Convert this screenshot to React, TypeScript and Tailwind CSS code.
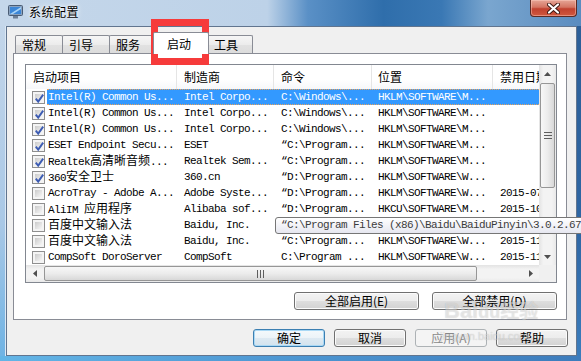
const CJK = /([\u2E80-\u9FFF]+)/;

function Mixed({ s }: { s: string }) {
  return (
    <span className="whitespace-pre">
      {s.split(CJK).map((p, i) =>
        i % 2 === 1 ? (
          <span key={i} className="font-['Noto_Sans_CJK_SC',sans-serif] text-[12px] tracking-normal">
            {p}
          </span>
        ) : (
          <span key={i}>{p}</span>
        )
      )}
    </span>
  );
}

type Row = { on: boolean; sel?: boolean; name: string; maker: string; cmd: string; loc: string; date: string };

const rows: Row[] = [
  { on: true, sel: true, name: "Intel(R) Common Us...", maker: "Intel Corpo...", cmd: "C:\\Windows\\...", loc: "HKLM\\SOFTWARE\\M...", date: "" },
  { on: true, name: "Intel(R) Common Us...", maker: "Intel Corpo...", cmd: "C:\\Windows\\...", loc: "HKLM\\SOFTWARE\\M...", date: "" },
  { on: true, name: "Intel(R) Common Us...", maker: "Intel Corpo...", cmd: "C:\\Windows\\...", loc: "HKLM\\SOFTWARE\\M...", date: "" },
  { on: true, name: "ESET Endpoint Secu...", maker: "ESET", cmd: "\u201CC:\\Program...", loc: "HKLM\\SOFTWARE\\M...", date: "" },
  { on: true, name: "Realtek高清晰音频...", maker: "Realtek Sem...", cmd: "\u201CC:\\Program...", loc: "HKLM\\SOFTWARE\\M...", date: "" },
  { on: true, name: "360安全卫士", maker: "360.cn", cmd: "\u201CD:\\Program...", loc: "HKLM\\SOFTWARE\\W...", date: "" },
  { on: false, name: "AcroTray - Adobe A...", maker: "Adobe Syste...", cmd: "\u201CD:\\Program...", loc: "HKLM\\SOFTWARE\\W...", date: "2015-07" },
  { on: false, name: "AliIM 应用程序", maker: "Alibaba sof...", cmd: "\u201CD:\\Program...", loc: "HKCU\\SOFTWARE\\M...", date: "2015-10" },
  { on: false, name: "百度中文输入法", maker: "Baidu, Inc.", cmd: "\u201CC:\\Program...", loc: "HKLM\\SOFTWARE\\W...", date: "2015-11" },
  { on: false, name: "百度中文输入法", maker: "Baidu, Inc.", cmd: "\u201CC:\\Program...", loc: "HKLM\\SOFTWARE\\W...", date: "2015-11" },
  { on: false, name: "CompSoft DoroServer", maker: "CompSoft", cmd: "C:\\Program ...", loc: "HKLM\\SOFTWARE\\W...", date: "2015-11" },
];

function Check({ on }: { on: boolean }) {
  return (
    <div className="relative h-[13px] w-[13px] border border-[#8f8f8f] bg-[#f4f4f4] p-[2px]">
      <div className="h-full w-full bg-[linear-gradient(135deg,#cbcbcb,#f6f6f6)]" />
      {on && (
        <svg className="absolute left-[1px] top-[1px]" width="11" height="11" viewBox="0 0 11 11">
          <path d="M1.8 5.6 L4.2 8.6 L9.2 1.6" fill="none" stroke="#3d5cb3" strokeWidth="1.9" />
        </svg>
      )}
    </div>
  );
}

function Arrow({ dir }: { dir: "up" | "down" | "left" | "right" }) {
  const pts = {
    up: "0,4 3.5,0 7,4",
    down: "0,0 3.5,4 7,0",
    left: "4,0 0,3.5 4,7",
    right: "0,0 4,3.5 0,7",
  }[dir];
  const vert = dir === "up" || dir === "down";
  return (
    <svg width={vert ? 7 : 4} height={vert ? 4 : 7} viewBox={vert ? "0 0 7 4" : "0 0 4 7"}>
      <polygon points={pts} fill="#4f4f4f" />
    </svg>
  );
}

function Btn({ label, w, kind }: { label: string; w: string; kind?: "def" | "off" }) {
  const look =
    kind === "def"
      ? "border-[#3c7fb1] shadow-[inset_0_0_0_1px_#a9d8f5] bg-[linear-gradient(#f4f9fc_0%,#ecf3f8_50%,#dde9f2_51%,#d3e3ee_100%)] text-black"
      : kind === "off"
        ? "border-[#adb2b5] bg-[#f4f4f4] text-[#8a8a8a]"
        : "border-[#707070] shadow-[inset_0_0_0_1px_#fbfbfb] bg-[linear-gradient(#f3f3f3_0%,#ececec_50%,#dedede_51%,#d2d2d2_100%)] text-black";
  return (
    <div className={`${w} flex h-[18px] items-center justify-center rounded-[3px] border text-[12px] leading-none ${look}`}>
      {label}
    </div>
  );
}

const tabBase =
  "flex h-[18px] items-center border border-b-0 border-[#898c95] rounded-t-[2px] pl-[6px] text-[12px] leading-none bg-[linear-gradient(#f6f6f6,#ececec_50%,#e2e2e2_51%,#dcdcdc)]";

export default function App() {
  return (
    <div className="relative flex h-[361px] w-[581px] flex-col overflow-hidden bg-[#3f7dba] font-['Noto_Sans_CJK_SC',sans-serif] text-black">
      {/* title bar */}
      <div className="flex h-[26px] shrink-0 items-start bg-[linear-gradient(to_right,#c5d7ea_0%,#bdd2e8_46%,#5a90c6_53%,#2f6eab_66%,#3a78b4_76%,#7aa6cf_84%,#6a99c7_92%,#5a8cc0_100%)]">
        <div className="mt-[5px] flex items-center gap-[6px] pl-[8px]">
          <svg width="15" height="14" viewBox="0 0 15 14">
            <rect x="0.5" y="0.5" width="14" height="10" rx="1" fill="#8aa2bf" stroke="#4a5c74" />
            <rect x="2" y="2" width="11" height="7" fill="#3c86d6" />
            <path d="M2 9 L13 2 L13 4 L5 9 Z" fill="#a9d4f7" />
            <rect x="5" y="11" width="5" height="2.5" fill="#6d7f96" />
          </svg>
          <span className="text-[12px] leading-[14px] tracking-[0.5px] [text-shadow:0_0_6px_#fff,0_0_3px_#fff]">系统配置</span>
        </div>
        <div className="ml-auto mr-[4px] flex h-[17px] w-[47px] items-center justify-center rounded-b-[4px] border border-t-0 border-[#5b2a24] bg-[linear-gradient(#e6a596_0%,#d47563_45%,#c1412f_55%,#d0583f_100%)] shadow-[inset_0_0_0_1px_rgba(255,210,200,0.45)]">
          <svg width="13" height="11" viewBox="0 0 13 11">
            <path d="M2 1.5 L11 9.5 M11 1.5 L2 9.5" stroke="#3b1610" strokeWidth="4" strokeLinecap="round" />
            <path d="M2 1.5 L11 9.5 M11 1.5 L2 9.5" stroke="#ffffff" strokeWidth="2.2" strokeLinecap="round" />
          </svg>
        </div>
      </div>

      {/* frame + client */}
      <div className="flex flex-1">
        <div className="w-[6px] bg-[linear-gradient(#c3d6ea,#a9c8e6_60%,#6fb3e4)] border-r border-[#dbe8f5]" />
        <div className="flex h-[330px] w-[571px] flex-col border border-[#61758f] bg-[#f0f0f0] pl-[6px] pr-[9px] pt-[5px]">
          {/* tabs */}
          <div className="ml-[2px] flex h-[21px] items-end">
            <div className={`${tabBase} w-[48px]`}>常规</div>
            <div className={`${tabBase} -ml-px w-[48px]`}>引导</div>
            <div className={`${tabBase} -ml-px w-[46px]`}>服务</div>
            <div className="relative z-10 -mb-px -ml-[2px] flex h-[22px] w-[56px] items-center rounded-t-[2px] border border-b-0 border-[#898c95] bg-white pl-[13px] text-[12px] leading-none">
              启动
            </div>
            <div className={`${tabBase} -ml-[2px] w-[46px]`}>工具</div>
          </div>

          {/* panel */}
          <div className="flex h-[267px] flex-col border border-[#898c95] bg-white pl-[11px] pr-[9px] pt-[10px]">
            {/* list view */}
            <div className="flex h-[219px] w-[532px] flex-col border border-[#828790] bg-white">
              <div className="flex h-[200px]">
                <div className="flex w-[513px] flex-col overflow-hidden">
                  <div className="flex h-[24px] shrink-0 bg-[linear-gradient(#ffffff,#ffffff_60%,#f6f7f9)] text-[12px] leading-none">
                    <div className="flex w-[151px] shrink-0 items-center border-r border-[#e5e5e5] pl-[7px]">启动项目</div>
                    <div className="flex w-[97px] shrink-0 items-center border-r border-[#e5e5e5] pl-[7px]">制造商</div>
                    <div className="flex w-[98px] shrink-0 items-center border-r border-[#e5e5e5] pl-[7px]">命令</div>
                    <div className="flex w-[121px] shrink-0 items-center border-r border-[#e5e5e5] pl-[6px]">位置</div>
                    <div className="flex w-[80px] shrink-0 items-center pl-[7px]">禁用日期</div>
                  </div>
                  {rows.map((r, i) => (
                    <div
                      key={i}
                      className="flex h-[16px] shrink-0 font-['Liberation_Mono','Noto_Sans_CJK_SC',monospace] text-[11px] leading-[16px] tracking-[-0.6px] whitespace-nowrap"
                    >
                      <div className="flex w-[21px] shrink-0 items-start pl-[6px] pt-[2px]">
                        <Check on={r.on} />
                      </div>
                      <div
                        className={`flex flex-1 ${
                          r.sel ? "border-y border-dotted border-[#e9a25a] bg-[#3399ff] text-white" : "text-black"
                        }`}
                      >
                        <div className={`flex w-[130px] shrink-0 items-center pl-[1px] ${r.sel ? "-my-px" : ""}`}>
                          <Mixed s={r.name} />
                        </div>
                        <div className={`flex w-[97px] shrink-0 items-center pl-[7px] ${r.sel ? "-my-px" : ""}`}>{r.maker}</div>
                        <div className={`flex w-[98px] shrink-0 items-center pl-[7px] ${r.sel ? "-my-px" : ""}`}>{r.cmd}</div>
                        <div className={`flex w-[121px] shrink-0 items-center pl-[6px] ${r.sel ? "-my-px" : ""}`}>{r.loc}</div>
                        <div className={`flex flex-1 items-center overflow-hidden pl-[7px] ${r.sel ? "-my-px" : ""}`}>{r.date}</div>
                      </div>
                    </div>
                  ))}
                </div>
                {/* vertical scrollbar */}
                <div className="flex w-[17px] flex-col bg-[linear-gradient(to_right,#e3e3e3,#f3f3f3_25%,#f3f3f3_75%,#e9e9e9)]">
                  <div className="flex h-[17px] items-center justify-center">
                    <Arrow dir="up" />
                  </div>
                  <div className="flex-1 px-px">
                    <div className="mt-px flex h-[105px] items-center justify-center rounded-[2px] border border-[#969696] bg-[linear-gradient(to_right,#f7f7f7,#ececec_50%,#d8d8d8)]">
                      <svg width="8" height="7" viewBox="0 0 8 7">
                        <path d="M0 0.5 H8 M0 3.5 H8 M0 6.5 H8" stroke="#5e5e5e" strokeWidth="1" />
                      </svg>
                    </div>
                  </div>
                  <div className="flex h-[17px] items-center justify-center">
                    <Arrow dir="down" />
                  </div>
                </div>
              </div>
              {/* horizontal scrollbar */}
              <div className="flex h-[17px]">
                <div className="flex w-[513px] bg-[linear-gradient(#e3e3e3,#f3f3f3_25%,#f3f3f3_75%,#e9e9e9)]">
                  <div className="flex w-[17px] items-center justify-center">
                    <Arrow dir="left" />
                  </div>
                  <div className="py-px pl-px">
                    <div className="flex h-full w-[433px] items-center justify-center rounded-[2px] border border-[#969696] bg-[linear-gradient(#f7f7f7,#ececec_50%,#d8d8d8)]">
                      <svg width="7" height="8" viewBox="0 0 7 8">
                        <path d="M0.5 0 V8 M3.5 0 V8 M6.5 0 V8" stroke="#5e5e5e" strokeWidth="1" />
                      </svg>
                    </div>
                  </div>
                  <div className="flex-1" />
                  <div className="flex w-[17px] items-center justify-center">
                    <Arrow dir="right" />
                  </div>
                </div>
                <div className="w-[17px] bg-[#f0f0f0]" />
              </div>
            </div>

            <div className="mt-[9px] flex justify-end gap-[13px]">
              <Btn label="全部启用(E)" w="w-[125px]" />
              <Btn label="全部禁用(D)" w="w-[125px]" />
            </div>
          </div>

          {/* dialog buttons */}
          <div className="-mr-px mt-[9px] flex justify-end gap-[9px]">
            <Btn label="确定" w="w-[72px]" kind="def" />
            <Btn label="取消" w="w-[72px]" />
            <Btn label="应用(A)" w="w-[72px]" kind="off" />
            <Btn label="帮助" w="w-[72px]" />
          </div>
        </div>
        <div className="w-[4px] bg-[linear-gradient(#2c5f98,#2e66a3_60%,#3a7cbc)]" />
      </div>
      <div className="h-[5px] shrink-0 bg-[linear-gradient(to_right,#63b5e6,#4d96d2_50%,#3d7cbc)]" />

      {/* tooltip */}
      <div className="absolute left-[275px] top-[217px] flex h-[17px] w-[330px] items-center rounded-[3px] border border-[#767676] bg-[linear-gradient(#ffffff,#e6e7f0)] pl-[5px] font-['Liberation_Mono',monospace] text-[11px] tracking-[-0.6px] whitespace-nowrap text-[#3c3c3c]">
        {"\u201CC:\\Program Files (x86)\\Baidu\\BaiduPinyin\\3.0.2.67"}
      </div>

      {/* watermark */}
      <div className="pointer-events-none absolute left-[444px] top-[300px] font-['Liberation_Sans',sans-serif] text-[22px] font-bold leading-none text-white/45 [text-shadow:0_0_1px_rgba(0,0,0,0.2)]">
        Bai<span className="text-[18px]">du</span>
        <span className="font-['Noto_Sans_CJK_SC',sans-serif] text-[19px]">经验</span>
      </div>
      <div className="pointer-events-none absolute left-[440px] top-[331px] font-['Liberation_Sans',sans-serif] text-[11px] leading-none text-white/45 [text-shadow:0_0_1px_rgba(0,0,0,0.25)]">
        jingyan.baidu.com
      </div>

      {/* red annotation */}
      <div className="pointer-events-none absolute left-[151px] top-[19px] h-[46px] w-[58px] border-[7px] border-[#f63b3b]" />
    </div>
  );
}
